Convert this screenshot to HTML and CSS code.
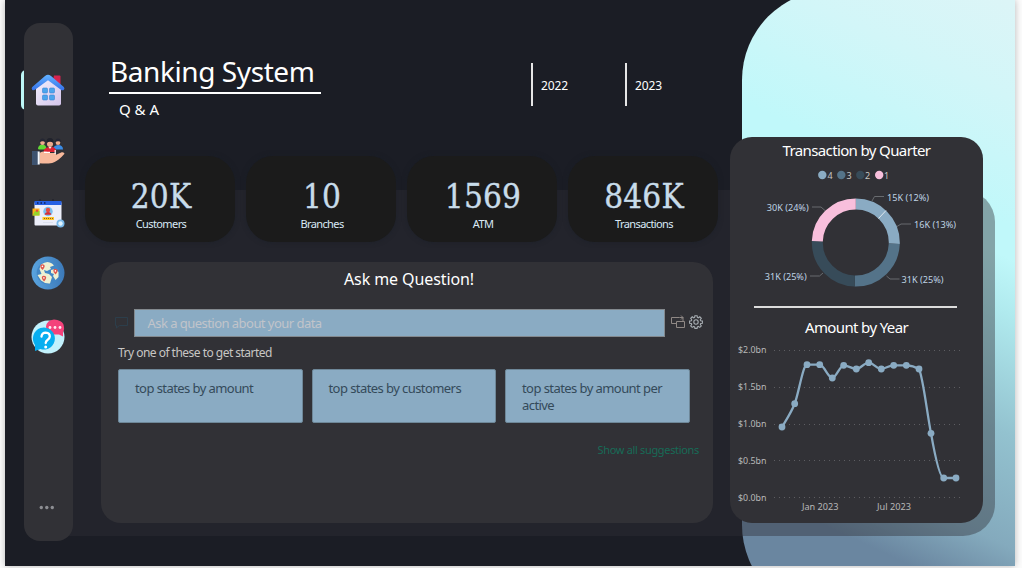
FILE: index.html
```html
<!DOCTYPE html>
<html lang="en">
<head>
<meta charset="utf-8">
<title>Banking System</title>
<link rel="stylesheet" href="styles.css">
</head>
<body>
<div class="stage">
  <div class="glow"></div>
  <div class="band"></div>
  <div class="active-mark"></div>

  <nav class="sidebar">
    <svg class="nav-icon" width="34" height="34" viewBox="0 0 34 34">
      <defs>
        <linearGradient id="wall" x1="0" y1="0" x2="1" y2="1"><stop offset="0" stop-color="#f2effc"/><stop offset="1" stop-color="#d3c4ea"/></linearGradient>
        <linearGradient id="roof" x1="0" y1="0" x2="0" y2="1"><stop offset="0" stop-color="#62b2ff"/><stop offset="1" stop-color="#3571ea"/></linearGradient>
      </defs>
      <path d="M23 2.500h5.500q1 0 1 1V12L22 7z" fill="#d5234e"/>
      <path d="M5 15 17 6l13 9v15.500q0 2-2 2H7q-2 0-2-2z" fill="url(#wall)"/>
      <path d="M17 1.800Q18.300 1.800 20 3l12.800 11q1.200 1.600.1 2.800-1.400 1-3 0L17 7.300 4 16.800q-1.700 1-2.900-.1-1-1.300.2-2.700L14 3q1.600-1.200 3-1.200z" fill="url(#roof)"/>
      <g fill="#4ba5ed" stroke="#3b82d4" stroke-width=".6"><rect x="11.500" y="15" width="5" height="5" rx="1"/><rect x="18.500" y="15" width="5" height="5" rx="1"/><rect x="11.500" y="22" width="5" height="5" rx="1"/><rect x="18.500" y="22" width="5" height="5" rx="1"/></g>
    </svg>
    <svg class="nav-icon" width="34" height="34" viewBox="0 0 34 34">
      <path d="M7 12q0-4 4-4.500 4 0 4.500 4v1H8z" fill="#62d934"/>
      <path d="M22 12.500q0-4 5-4.500 5 0 5 4.500z" fill="#3a8ce6"/>
      <circle cx="11.500" cy="5.800" r="2.300" fill="#efad8d"/><path d="M8.700 5q0-3.500 2.800-3.500t3.100 3.500q-3-1.700-5.900 0z" fill="#252733"/>
      <circle cx="27" cy="5.800" r="2.300" fill="#efad8d"/><path d="M24.200 5q0-3.500 2.800-3.500t3.100 3.500q-3-1.700-5.900 0z" fill="#252733"/>
      <path d="M12.500 15q0-4.500 6.500-5t6 5z" fill="#de2032"/>
      <circle cx="19" cy="7" r="3" fill="#edaa8c"/><path d="M15.500 6q-.3-5 3.500-5t3.500 5q-3.500-2.500-7 0z" fill="#20222c"/><path d="M17.500 10h3L19 12z" fill="#f7ece7"/>
      <path d="M8.500 16q5-2.800 9.500.1h6q2 1.200.2 2.700l-4 1.100 10.500-4.700q2.600-.4 2.800 1.600-5.800 7-12.300 9.200-6.500 1-12.700.2z" fill="#f8b99c"/>
      <path d="M13 15.300h6M24.200 13v4" stroke="#fff" stroke-width="1.200"/>
      <path d="M1 14h6.500v14H1z" fill="#3d526f"/><path d="M6.700 14.500h2V27.500h-2z" fill="#f4f7fb"/>
    </svg>
    <svg class="nav-icon" width="34" height="34" viewBox="0 0 34 34">
      <rect x="3.500" y="5" width="27" height="23.500" rx="1" fill="#eceef9"/>
      <path d="M3.500 4h27v4h-27z" fill="#2761e3"/><path d="M6 6h1.500m2 0H11m2 0h1.500" stroke="#15317b" stroke-width="1.800"/>
      <path d="M9 2v2m13-2v2" stroke="#1e1e28"/>
      <circle cx="17" cy="14.500" r="4.700" fill="#7bbff0"/><circle cx="17" cy="13" r="2.200" fill="#e44d43"/><path d="M13.700 17.800q.5-2.700 3.300-2.700t3.300 2.700z" fill="#d92d36"/>
      <rect x="11.500" y="20" width="11.500" height="3" fill="#ffc72b"/><path d="M13 21.500h9" stroke="#926021" stroke-dasharray="1 1"/>
      <path d="M12 25.500h10" stroke="#dce1ee"/>
      <path d="M1.500 11.500h7v7h-7z" fill="#ffb219"/><path d="M4 14h4.500v4.500h-7z" fill="#96d52b"/><circle cx="6" cy="13.700" r="1.200" fill="#e4533a"/>
      <circle cx="29.500" cy="26.500" r="4" fill="#79b9ea"/><circle cx="29.500" cy="26.500" r="2.200" fill="#e0f3ff"/>
    </svg>
    <svg class="nav-icon" width="34" height="34" viewBox="0 0 34 34">
      <defs><linearGradient id="ring"><stop offset="0" stop-color="#5aa4df"/><stop offset="1" stop-color="#3c79b8"/></linearGradient></defs>
      <circle cx="17" cy="17" r="16.500" fill="url(#ring)"/><circle cx="17" cy="17" r="11.300" fill="#4287c6"/>
      <path d="M10 8.500q6-4.500 11-1l2 2-4 1.500 1 2-4 2-3-1 1 3 4 1 3 3-2 6.500q-5 .5-9-3L6.500 19l4-1-2-5z" fill="#edf0d2"/>
      <path d="m20 14 4-1 3.500 3v5l-3 3-2.500-4 1-2-3-1z" fill="#edf0d2"/>
      <g fill="#e0564b"><path d="M11.500 14q-2.600-2.700-2.200-4.500 1.400-2 4-.5 1.300 1.700-1.800 5z"/><path d="M24.500 18.500q-2.600-2.700-2.200-4.500 1.400-2 4-.5 1.300 1.700-1.800 5z"/><path d="M13 25.500q-2.600-2.700-2.200-4.500 1.400-2 4-.5 1.300 1.700-1.800 5z"/></g>
      <g fill="#fff"><circle cx="11.400" cy="10.400" r=".8"/><circle cx="24.400" cy="14.900" r=".8"/><circle cx="12.900" cy="21.900" r=".8"/></g>
    </svg>
    <svg class="nav-icon" width="34" height="36" viewBox="0 0 34 36">
      <circle cx="17" cy="19" r="16.500" fill="#c2f1fc"/>
      <path d="M23 1.500q-7 .5-8 7 0 7 7.500 8H28l4 2V14q2-3 .3-8-2-4-9.300-4.500z" fill="#f4427b"/>
      <g fill="#ffe9f2"><circle cx="19" cy="9.500" r="1.400"/><circle cx="24" cy="9.500" r="1.400"/><circle cx="29" cy="9.500" r="1.400"/></g>
      <path d="M4 33v-6a11 11 0 1 1 5.500 4z" fill="#07aef0"/>
      <path d="M10.500 18.500q.5-3.800 4.200-3.800 4.300.4 4.100 4-.2 2-2.300 3.200-1.800 1.100-1.800 3.100" fill="none" stroke="#fff" stroke-width="2.300" stroke-linecap="round"/><circle cx="14.700" cy="29" r="1.500" fill="#fff"/>
    </svg>
    <svg class="more" width="16" height="5" viewBox="0 0 16 5" fill="#8d8e93"><circle cx="2.300" cy="2.500" r="1.700"/><circle cx="7.800" cy="2.500" r="1.700"/><circle cx="13.300" cy="2.500" r="1.700"/></svg>
  </nav>

  <main class="main">
    <header class="header">
      <div class="heading">
        <h1 class="title">Banking System</h1>
        <div class="subtitle">Q &amp; A</div>
      </div>
      <div class="years"><div class="year">2022</div><div class="year">2023</div></div>
    </header>

    <section class="cards">
      <div class="card"><div class="value">20K</div><div class="label">Customers</div></div>
      <div class="card"><div class="value">10</div><div class="label">Branches</div></div>
      <div class="card"><div class="value">1569</div><div class="label">ATM</div></div>
      <div class="card"><div class="value">846K</div><div class="label">Transactions</div></div>
    </section>

    <section class="qa">
      <h2 class="qa-title">Ask me Question!</h2>
      <div class="ask">
        <svg width="13" height="12" viewBox="0 0 13 12" fill="none" stroke="#2c3e4b"><path d="M.5.500h12v8H4.300L1.500 11V8.500h-1z"/></svg>
        <div class="field">Ask a question about your data</div>
        <svg class="convert" width="14" height="14" viewBox="0 0 14 14" fill="none" stroke="#8f8885"><path d="M5 8.500H.5v-6h8M5.500 6.500h8v6h-8zM8.500 2.500H12V6M10 .500l2 2-2 2"/></svg>
        <svg class="gear" width="14" height="14" viewBox="0 0 14 14" fill="none" stroke="#a7adb2" stroke-width="1.100"><path d="M5.900.700h2.200l.3 1.700 1 .4 1.400-1 1.500 1.500-1 1.400.4 1 1.700.3v2.200l-1.700.3-.4 1 1 1.400-1.500 1.500-1.400-1-1 .4-.3 1.600H5.900l-.3-1.600-1-.4-1.400 1-1.500-1.500 1-1.400-.4-1L.600 8.200V6l1.700-.3.4-1-1-1.400 1.500-1.500 1.400 1 1-.4z"/><circle cx="7" cy="7" r="2.200"/></svg>
      </div>
      <div class="hint">Try one of these to get started</div>
      <div class="suggestions">
        <div class="suggestion">top states by amount</div>
        <div class="suggestion">top states by customers</div>
        <div class="suggestion">top states by amount per active</div>
      </div>
      <div class="show-all">Show all suggestions</div>
    </section>
  </main>

  <aside class="panel">
    <h2 class="panel-title">Transaction by Quarter</h2>
    <svg class="donut" width="253" height="132" viewBox="730 166 253 132">
      <g class="legend">
        <circle cx="822.300" cy="175" r="4.200" fill="#8aabc3"/><text x="827.500" y="179">4</text>
        <circle cx="841.300" cy="175" r="4.200" fill="#547389"/><text x="846.500" y="179">3</text>
        <circle cx="860.300" cy="175" r="4.200" fill="#374b59"/><text x="865" y="179">2</text>
        <circle cx="879.200" cy="175" r="4.200" fill="#f8bfdc"/><text x="884" y="179">1</text>
      </g>
      <path class="leader" d="m872 201 2.500-4.500h9.500M897 226.500l4-2.500h10M886.500 276l3.500 3h9.500M825 210.500l-4-3.500H812M823 273l-3.500 3H810"/>
      <g fill="none" stroke-width="11" transform="rotate(-90 855.800 242.500)">
        <circle cx="855.800" cy="242.500" r="38.500" pathLength="360" stroke="#8aabc3" stroke-dasharray="92 268"/>
        <circle cx="855.800" cy="242.500" r="38.500" pathLength="360" stroke="#547389" stroke-dasharray="89.500 270.500" stroke-dashoffset="-92"/>
        <circle cx="855.800" cy="242.500" r="38.500" pathLength="360" stroke="#374b59" stroke-dasharray="90.500 269.500" stroke-dashoffset="-181.500"/>
        <circle cx="855.800" cy="242.500" r="38.500" pathLength="360" stroke="#f8bfdc" stroke-dasharray="88 272" stroke-dashoffset="-272"/>
      </g>
      <path d="m878.500 218.500 7.500-8" stroke="#dfe8ee"/>
      <g class="data">
        <text x="887" y="201" textLength="42" lengthAdjust="spacingAndGlyphs">15K (12%)</text>
        <text x="914" y="228" textLength="42" lengthAdjust="spacingAndGlyphs">16K (13%)</text>
        <text x="901.500" y="283" textLength="42" lengthAdjust="spacingAndGlyphs">31K (25%)</text>
        <text x="764.700" y="280" textLength="42" lengthAdjust="spacingAndGlyphs">31K (25%)</text>
        <text x="766.700" y="211" textLength="42" lengthAdjust="spacingAndGlyphs">30K (24%)</text>
      </g>
    </svg>
    <div class="rule"></div>
    <h2 class="panel-title">Amount by Year</h2>
    <svg class="line-chart" width="253" height="178" viewBox="730 340 253 178">
      <path class="grid" d="M774 350.500h190M774 387.500h190M774 424.500h190M774 460.500h190M774 497.500h190"/>
      <g class="axis">
        <text x="738" y="353" textLength="28.500" lengthAdjust="spacingAndGlyphs">$2.0bn</text>
        <text x="738" y="390" textLength="28.500" lengthAdjust="spacingAndGlyphs">$1.5bn</text>
        <text x="738" y="427" textLength="28.500" lengthAdjust="spacingAndGlyphs">$1.0bn</text>
        <text x="738" y="464" textLength="28.500" lengthAdjust="spacingAndGlyphs">$0.5bn</text>
        <text x="738" y="501" textLength="28.500" lengthAdjust="spacingAndGlyphs">$0.0bn</text>
        <text x="802" y="510" textLength="36.500" lengthAdjust="spacingAndGlyphs">Jan 2023</text>
        <text x="877" y="510" textLength="34" lengthAdjust="spacingAndGlyphs">Jul 2023</text>
      </g>
      <path d="M782 427C786 420 791 413 794.700 403.700 799 392 803 364.700 807 364.700H819.700C824 364.700 828 378 832.300 378 836 378 840 365.300 843.700 365.300 848 365.300 852 369 856.300 369 860 369 864.500 362.700 868.700 362.700 873 362.700 877 369 881.300 369 885 369 889 365.300 893.700 365.300H906.300Q913 365.500 919 369C923 377 927 413 931 433.300 935 456 940 478 943.700 478H956" fill="none" stroke="#8aabc3" stroke-width="2.300"/>
      <g fill="#8aabc3"><circle cx="782" cy="427" r="3.400"/><circle cx="794.700" cy="403.700" r="3.400"/><circle cx="807" cy="364.700" r="3.400"/><circle cx="819.700" cy="364.700" r="3.400"/><circle cx="832.300" cy="378" r="3.400"/><circle cx="843.700" cy="365.300" r="3.400"/><circle cx="856.300" cy="369" r="3.400"/><circle cx="868.700" cy="362.700" r="3.400"/><circle cx="881.300" cy="369" r="3.400"/><circle cx="893.700" cy="365.300" r="3.400"/><circle cx="906.300" cy="365.300" r="3.400"/><circle cx="919" cy="369" r="3.400"/><circle cx="931" cy="433.300" r="3.400"/><circle cx="943.700" cy="478" r="3.400"/><circle cx="956" cy="478" r="3.400"/></g>
    </svg>
  </aside>
</div>
</body>
</html>
```
FILE: styles.css
```css
* { box-sizing: border-box; }
body { margin: 0; background: #fcfcfc; overflow: hidden; font-family: "Noto Sans", "Open Sans", sans-serif; color: #fff; }
h1, h2 { margin: 0; font-weight: 400; }
svg { display: block; flex: none; }

.stage { position: relative; display: flex; align-items: flex-start; width: 1010px; height: 566px; margin: 0 0 2px 5px; overflow: hidden; background: #1b1d25; box-shadow: 0 0 7px rgba(0,0,0,.28); }
.glow { position: absolute; left: 737px; top: -10px; width: 380px; height: 625px; border-radius: 90px; background: linear-gradient(205deg, #dcf5f7 8%, #d2f6f8 20%, #c0f8fa 36%, #c0f8fa 40%, #b0eaee 47%, #93c2cf 62%, #84aabd 76%, #6a86a0 84%); }
.band { position: absolute; left: 43px; top: 190px; width: 947px; height: 346px; border-radius: 0 32px 32px 0; background: rgba(48,48,54,.42); }
.active-mark { position: absolute; left: 16px; top: 70px; width: 12px; height: 40px; border-radius: 5px; background: #bdf7f7; }

.sidebar { position: relative; display: flex; flex-direction: column; align-items: center; width: 49px; height: 518px; margin: 23px 0 0 19px; padding-top: 50px; border-radius: 16px; background: #313136; }
.nav-icon { margin: 0 1px 28px 0; }
.nav-icon:nth-child(1) { margin-bottom: 30px; }
.nav-icon:nth-child(2) { margin-bottom: 26px; }
.nav-icon:nth-child(3) { margin-bottom: 25px; }
.more { margin: auto 3px 31px 0; }

.main { position: relative; width: 633px; margin-left: 12px; padding-top: 55px; }
.header { display: flex; height: 101px; padding-left: 24px; }
.heading { width: 212px; }
.title { height: 39px; padding-left: 1px; border-bottom: 2px solid #fff; font-size: 28px; line-height: 33px; letter-spacing: -.42px; white-space: nowrap; }
.subtitle { padding: 5px 0 0 10px; font-size: 15px; line-height: 20px; }
.years { display: flex; gap: 49px; margin: 8px 0 0 210px; }
.year { width: 45px; height: 43px; padding-left: 8px; border-left: 2.500px solid #e6e6e6; font-size: 12px; line-height: 45px; letter-spacing: -.1px; }

.cards { display: flex; gap: 11px; }
.card { display: flex; flex-direction: column; align-items: center; width: 150px; height: 86px; padding-top: 21px; border-radius: 27px; background: #1b1b1b; box-shadow: 0 0 5px rgba(25,30,39,.6); }
.value { padding-left: 2px; font-family: "DejaVu Serif Condensed", "DejaVu Serif", serif; font-stretch: condensed; font-size: 33px; line-height: 39px; letter-spacing: .2px; color: #c8dcea; -webkit-text-stroke: .35px #c8dcea; }
.label { padding-left: 2px; font-size: 11px; line-height: 16px; letter-spacing: -.6px; color: #d9e9f6; }

.qa { display: flex; flex-direction: column; width: 612px; height: 261px; margin: 20px 0 0 16px; border-radius: 20px; background: #313136; }
.qa-title { margin-top: 6px; padding-left: 4px; font-size: 16px; line-height: 22px; letter-spacing: -.1px; text-align: center; }
.ask { display: flex; align-items: center; height: 28px; margin: 19px 0 0 14px; }
.field { width: 531px; height: 28px; margin-left: 6px; padding-left: 12.500px; border: 1px solid #83898e; background: #8aabc3; color: #c1c4ca; font-size: 13px; line-height: 27px; letter-spacing: -.54px; }
.convert { margin: -2px 0 0 6px; }
.gear { margin: -2px 0 0 4px; }
.hint { margin: 7px 0 0 17px; font-size: 12px; line-height: 18px; letter-spacing: -.52px; color: #c8c6c4; }
.suggestions { display: flex; gap: 9px; margin: 7px 0 0 17px; }
.suggestion { width: 184.500px; height: 54px; padding: 10px 10px 10px 16px; border: 1px solid #6e8798; border-radius: 2px; background: #8aabc3; color: #344a5a; font-size: 13px; line-height: 17px; letter-spacing: -.57px; }
.show-all { margin: 18px 14px 0 0; font-size: 11px; line-height: 18px; letter-spacing: -.33px; text-align: right; color: #176b56; }

.panel { position: relative; width: 253px; height: 386px; margin: 137px 0 0 12px; padding-top: 2px; border-radius: 22px; background: #313136; }
.panel-title { height: 26px; font-size: 15px; line-height: 22px; letter-spacing: -.63px; text-align: center; }
.donut { margin-top: 1px; }
.rule { height: 2px; margin: 8px 26px 8px 24px; background: #dcdcdc; }
.line-chart { margin-top: -2px; }
.legend { font-size: 9px; fill: #c8c6c4; }
.leader { fill: none; stroke: #686b6f; }
.data { font-size: 9px; fill: #bfd3e4; }
.axis { font-size: 9px; fill: #b8b8b8; }
.grid { fill: none; stroke: #5d5d62; stroke-dasharray: 1 4; }
```
